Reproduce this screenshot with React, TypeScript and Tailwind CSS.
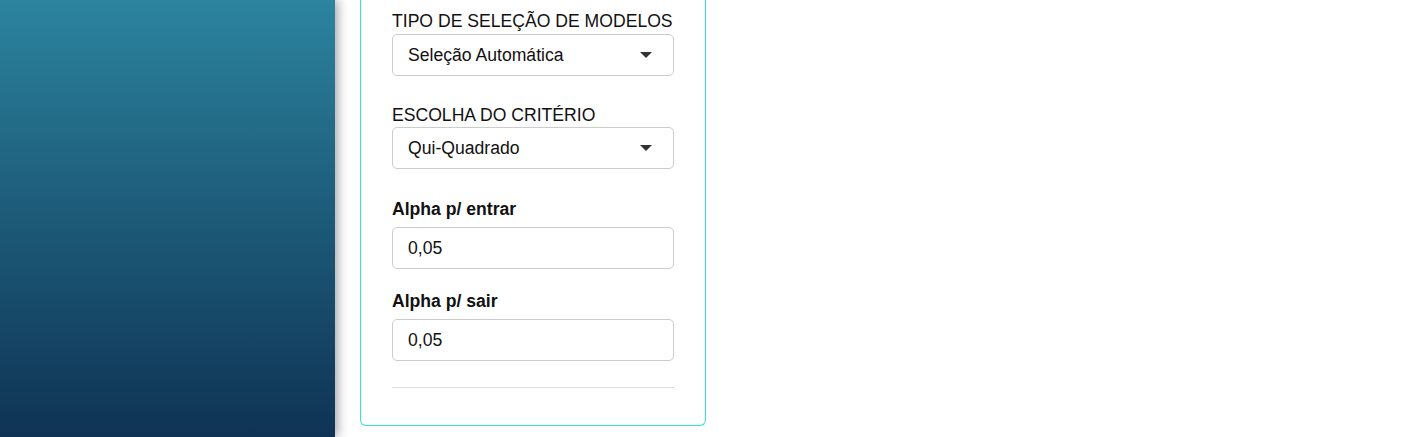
import React from "react";

function Caret() {
  return (
    <svg width="12" height="6" viewBox="0 0 12 6" className="shrink-0">
      <path d="M0 0 L12 0 L6 6 Z" fill="#333333" />
    </svg>
  );
}

function SelectBox({ value }: { value: string }) {
  return (
    <div className="flex h-[42px] w-full items-center justify-between rounded-[5px] border border-[#cccccc] bg-white pl-[15px] pr-[21px] text-[17.6px] text-[#111]">
      <span>{value}</span>
      <Caret />
    </div>
  );
}

function InputBox({ value }: { value: string }) {
  return (
    <div className="flex h-[42px] w-full items-center rounded-[5px] border border-[#cccccc] bg-white pl-[15px] text-[17.6px] text-[#111]">
      {value}
    </div>
  );
}

export default function App() {
  return (
    <div
      className="flex h-[437px] w-[1404px] overflow-hidden bg-white"
      style={{ fontFamily: '"Liberation Sans", Arial, sans-serif' }}
    >
      <div className="relative z-10 h-full w-[335px] shrink-0 bg-gradient-to-b from-[#2c849e] to-[#0f3354] shadow-[3px_0_10px_rgba(0,0,0,0.35)]" />
      <div className="ml-[25px] flex h-[426px] w-[346px] flex-col rounded-b-[6px] border border-t-0 border-[#2fe8c8] px-[31px] pt-[9px] pb-[37px]">
        <div className="mb-px h-[24px] text-[17.6px] leading-[24px] text-[#111]">TIPO DE SELEÇÃO DE MODELOS</div>
        <SelectBox value="Seleção Automática" />
        <div className="mt-[27px] h-[24px] text-[17.6px] leading-[24px] text-[#111]">ESCOLHA DO CRITÉRIO</div>
        <SelectBox value="Qui-Quadrado" />
        <div className="mt-[28px] mb-[6px] h-[24px] text-[17.6px] font-bold leading-[24px] text-[#111]">Alpha p/ entrar</div>
        <InputBox value="0,05" />
        <div className="mt-[20px] mb-[6px] h-[24px] text-[17.6px] font-bold leading-[24px] text-[#111]">Alpha p/ sair</div>
        <InputBox value="0,05" />
        <div className="mt-[26px] h-px w-full bg-[#dddddd]" />
      </div>
    </div>
  );
}
